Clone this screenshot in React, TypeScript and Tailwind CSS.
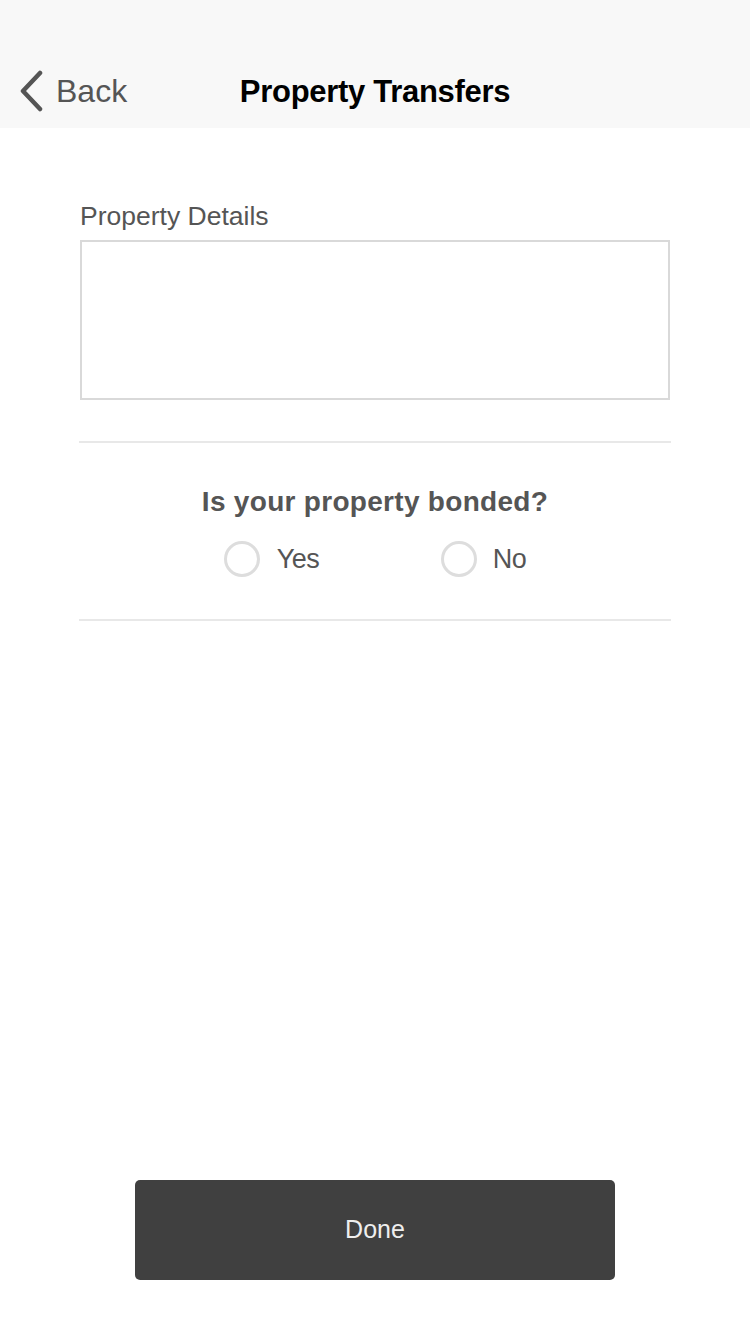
export default function App() {
  return (
    <div className="min-h-[1334px] w-[750px] bg-white flex flex-col font-['Liberation_Sans',Arial,sans-serif]">
      {/* Navigation bar */}
      <div className="h-[128px] bg-[#f8f8f8] relative flex items-end pb-[16px]">
        <div className="flex items-center pl-[18px] text-[#555555]">
          <svg width="26" height="42" viewBox="0 0 26 42" className="mr-[12px]">
            <path
              d="M22 3 L5 21 L22 39"
              stroke="#555555"
              strokeWidth="4.5"
              fill="none"
              strokeLinecap="round"
              strokeLinejoin="round"
            />
          </svg>
          <span className="text-[32px] leading-[40px]">Back</span>
        </div>
        <div className="absolute left-0 right-0 bottom-[16px] text-center pointer-events-none">
          <span className="text-[31px] leading-[40px] font-bold text-black tracking-[-0.3px]">
            Property Transfers
          </span>
        </div>
      </div>

      {/* Form */}
      <div className="px-[80px] pt-[72px]">
        <div className="text-[26.5px] leading-[32px] text-[#555555]">
          Property Details
        </div>
        <div className="mt-[8px] h-[160px] border-2 border-[#d9d9d9] bg-white" />
      </div>

      <div className="mx-[79px] mt-[41px] h-[2px] bg-[#e8e8e8]" />

      <div className="flex flex-col items-center pt-[42px]">
        <div className="text-[28px] leading-[34px] font-bold text-[#555555] tracking-[0.3px]">
          Is your property bonded?
        </div>
        <div className="flex mt-[22px]">
          <div className="w-[217px] flex items-center">
            <span className="w-[36px] h-[36px] rounded-full border-[3px] border-[#dddddd]" />
            <span className="ml-[17px] text-[27px] leading-[36px] text-[#555555] tracking-[-0.5px]">Yes</span>
          </div>
          <div className="flex items-center">
            <span className="w-[36px] h-[36px] rounded-full border-[3px] border-[#dddddd]" />
            <span className="ml-[16px] text-[27px] leading-[36px] text-[#555555] tracking-[-0.5px]">No</span>
          </div>
        </div>
      </div>

      <div className="mx-[79px] mt-[42px] h-[2px] bg-[#e8e8e8]" />

      <div className="flex-1" />

      <div className="flex justify-center pb-[54px]">
        <button className="w-[480px] h-[100px] rounded-[5px] bg-[#404040] text-[#eeeeee] text-[25px]">
          Done
        </button>
      </div>
    </div>
  );
}
